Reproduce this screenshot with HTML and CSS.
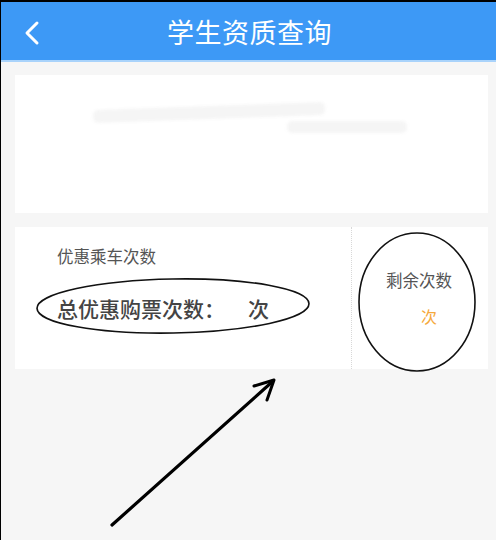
FILE: index.html
```html
<!DOCTYPE html>
<html lang="zh-CN">
<head>
<meta charset="utf-8">
<title>学生资质查询</title>
<link rel="stylesheet" href="styles.css">
</head>
<body>
<div class="page">
  <header class="topbar">
    <svg class="back" width="16" height="26" viewBox="0 0 16 26"><path d="M13 3 L3 13 L13 23" fill="none" stroke="#fff" stroke-width="3" stroke-linecap="round" stroke-linejoin="round"/></svg>
    <h1 class="title">学生资质查询</h1>
  </header>
  <main class="content">
    <section class="card info">
      <div class="smudge s1"></div>
      <div class="smudge s2"></div>
    </section>
    <section class="card counts">
      <div class="counts-left">
        <div class="label">优惠乘车次数</div>
        <div class="total">总优惠购票次数：<span class="unit">次</span></div>
      </div>
      <div class="counts-right">
        <div class="label">剩余次数</div>
        <div class="remain">次</div>
      </div>
    </section>
  </main>
  <svg class="marks" width="496" height="540" viewBox="0 0 496 540">
    <ellipse cx="173" cy="306" rx="136" ry="27" fill="none" stroke="#111" stroke-width="1.6" transform="rotate(-1 173 306)"/>
    <ellipse cx="417" cy="302" rx="58" ry="69" fill="none" stroke="#111" stroke-width="1.6"/>
    <path d="M112 525 L272 382" stroke="#000" stroke-width="3.2" stroke-linecap="round" fill="none"/>
    <path d="M254 386 L274 380 L267 400" stroke="#000" stroke-width="3" stroke-linecap="round" stroke-linejoin="round" fill="none"/>
  </svg>
</div>
</body>
</html>
```
FILE: styles.css
```css
html, body {
  margin: 0;
  padding: 0;
  background: #000;
}
.page {
  position: relative;
  width: 495px;
  height: 538px;
  margin: 2px 0 0 1px;
  background: #f6f6f6;
  font-family: "Noto Sans CJK SC", "Noto Sans", sans-serif;
  overflow: hidden;
}
.topbar {
  position: relative;
  height: 58px;
  background: #3d99f6;
  border-bottom: 2px solid #a9d3fb;
  display: flex;
  align-items: center;
  justify-content: center;
}
.back {
  position: absolute;
  left: 23px;
  top: 18px;
}
.title {
  margin: 0;
  color: #fff;
  font-size: 27px;
  font-weight: 400;
  letter-spacing: 0.5px;
  line-height: 1;
  padding-left: 2px;
}
.content {
  padding: 13px 8px 0 14px;
  display: flex;
  flex-direction: column;
  gap: 14px;
}
.card {
  background: #fff;
}
.info {
  position: relative;
  height: 138px;
}
.smudge {
  position: absolute;
  background: #f5f5f5;
  filter: blur(1.5px);
  border-radius: 5px;
}
.s1 {
  left: 78px;
  top: 31px;
  width: 232px;
  height: 13px;
  transform: rotate(-2deg);
}
.s2 {
  left: 272px;
  top: 46px;
  width: 120px;
  height: 12px;
}
.counts {
  height: 142px;
  display: flex;
}
.counts-left {
  width: 337px;
  border-right: 1px dotted #d8d8d8;
  padding: 17px 0 0 42px;
  box-sizing: border-box;
}
.label {
  font-size: 16.5px;
  color: #555;
  line-height: 24px;
}
.total {
  margin-top: 26px;
  font-size: 21px;
  font-weight: 500;
  color: #444;
  line-height: 28px;
}
.unit {
  margin-left: 23px;
}
.counts-right {
  flex: 1;
  padding: 41px 0 0 34px;
  box-sizing: border-box;
}
.remain {
  margin: 12px 0 0 35px;
  font-size: 16px;
  color: #f5a93c;
  line-height: 24px;
}
.marks {
  position: absolute;
  left: -1px;
  top: -2px;
}
```
